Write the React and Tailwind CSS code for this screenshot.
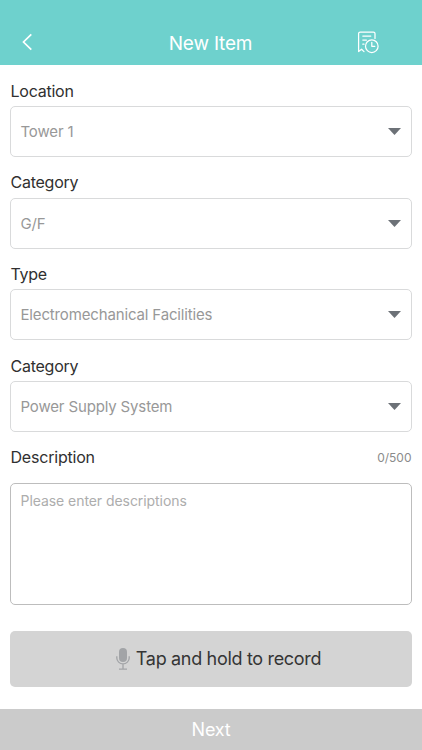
const fields = [
  { label: 'Location', value: 'Tower 1' },
  { label: 'Category', value: 'G/F' },
  { label: 'Type', value: 'Electromechanical Facilities' },
  { label: 'Category', value: 'Power Supply System' },
];

function BackIcon() {
  return (
    <svg width="12" height="18" viewBox="0 0 12 18" fill="none" stroke="white" strokeWidth="1.7">
      <path d="M10.3 1.3 2.5 9l7.8 7.7" />
    </svg>
  );
}

function HistoryIcon() {
  return (
    <svg width="22" height="23" viewBox="0 0 22 23" fill="none" stroke="white" strokeWidth="1.25" strokeLinecap="round" strokeLinejoin="round">
      <path d="M18 7.4V2.6Q18 1 16.4 1H3.2Q1.6 1 1.6 2.6V20.6L4.6 18.2 7 20.6" />
      <path d="M5.8 5H13.8M5.8 9H9.4M5.8 13.2H7" />
      <circle cx="14.8" cy="15.2" r="6.3" />
      <path d="M14.8 11.3V15.3H17.8" />
    </svg>
  );
}

function MicIcon() {
  return (
    <svg width="14" height="22" viewBox="0 0 14 22" fill="none" stroke="#a2a4a7" strokeWidth="1.3">
      <rect x="3" y="0" width="8" height="14" rx="4" fill="#a2a4a7" stroke="none" />
      <path d="M.8 8.2V10A6.2 5.8 0 0 0 13.2 10V8.2M7 16V21M3 21.1H11" />
    </svg>
  );
}

function SelectField({ label, value }) {
  return (
    <div className="h-[91.7px]">
      <div className="flex h-[31px] items-center pl-[0.5px] text-[16px] leading-5 tracking-[-0.25px] text-[#303030]">{label}</div>
      <div className="flex h-[51px] items-center justify-between rounded-[5px] border border-[#d9dadb] pl-[9.5px] pr-[10px]">
        <span className="pt-[1.6px] text-[15px] tracking-[-0.15px] text-[#989898]">{value}</span>
        <svg width="13" height="7" viewBox="0 0 13 7">
          <path d="M0 0H13L6.5 7Z" fill="#6c7177" />
        </svg>
      </div>
    </div>
  );
}

export default function App() {
  return (
    <div className="flex h-[750px] w-[422px] flex-col bg-white font-['Inter',sans-serif]">
      <header className="grid h-[65px] grid-cols-3 items-center bg-[#6ed1cd] pt-[19px]">
        <div className="pl-[21px]"><BackIcon /></div>
        <h1 className="pr-px pt-[3px] text-center text-[19px] leading-6 tracking-[-0.2px] text-white">New Item</h1>
        <div className="flex justify-end pr-[43px]"><HistoryIcon /></div>
      </header>
      <main className="flex flex-1 flex-col px-[10px] pt-[10px]">
        {fields.map((f, i) => <SelectField key={i} {...f} />)}
        <div className="flex h-[31px] items-center justify-between px-[0.5px]">
          <span className="text-[16px] leading-5 tracking-[-0.2px] text-[#303030]">Description</span>
          <span className="pt-[2px] text-[12px] text-[#8b8b8b]">0/500</span>
        </div>
        <div className="mt-[10px] h-[122px] shrink-0 rounded-[5px] border border-[#bdbdbd] px-[9.5px] pt-[7px] text-[14px] leading-5 tracking-[-0.06px] text-[#adadad]">
          Please enter descriptions
        </div>
        <button className="mt-[26px] flex h-[56px] shrink-0 items-center justify-center gap-[6px] rounded-[5px] bg-[#d4d4d4] pl-[15px] text-[18px] tracking-[-0.32px] text-[#353535]">
          <MicIcon />
          <span>Tap and hold to record</span>
        </button>
      </main>
      <button className="h-[41px] shrink-0 bg-[#cbcbcb] text-[18px] tracking-[-0.2px] text-white">Next</button>
    </div>
  );
}
